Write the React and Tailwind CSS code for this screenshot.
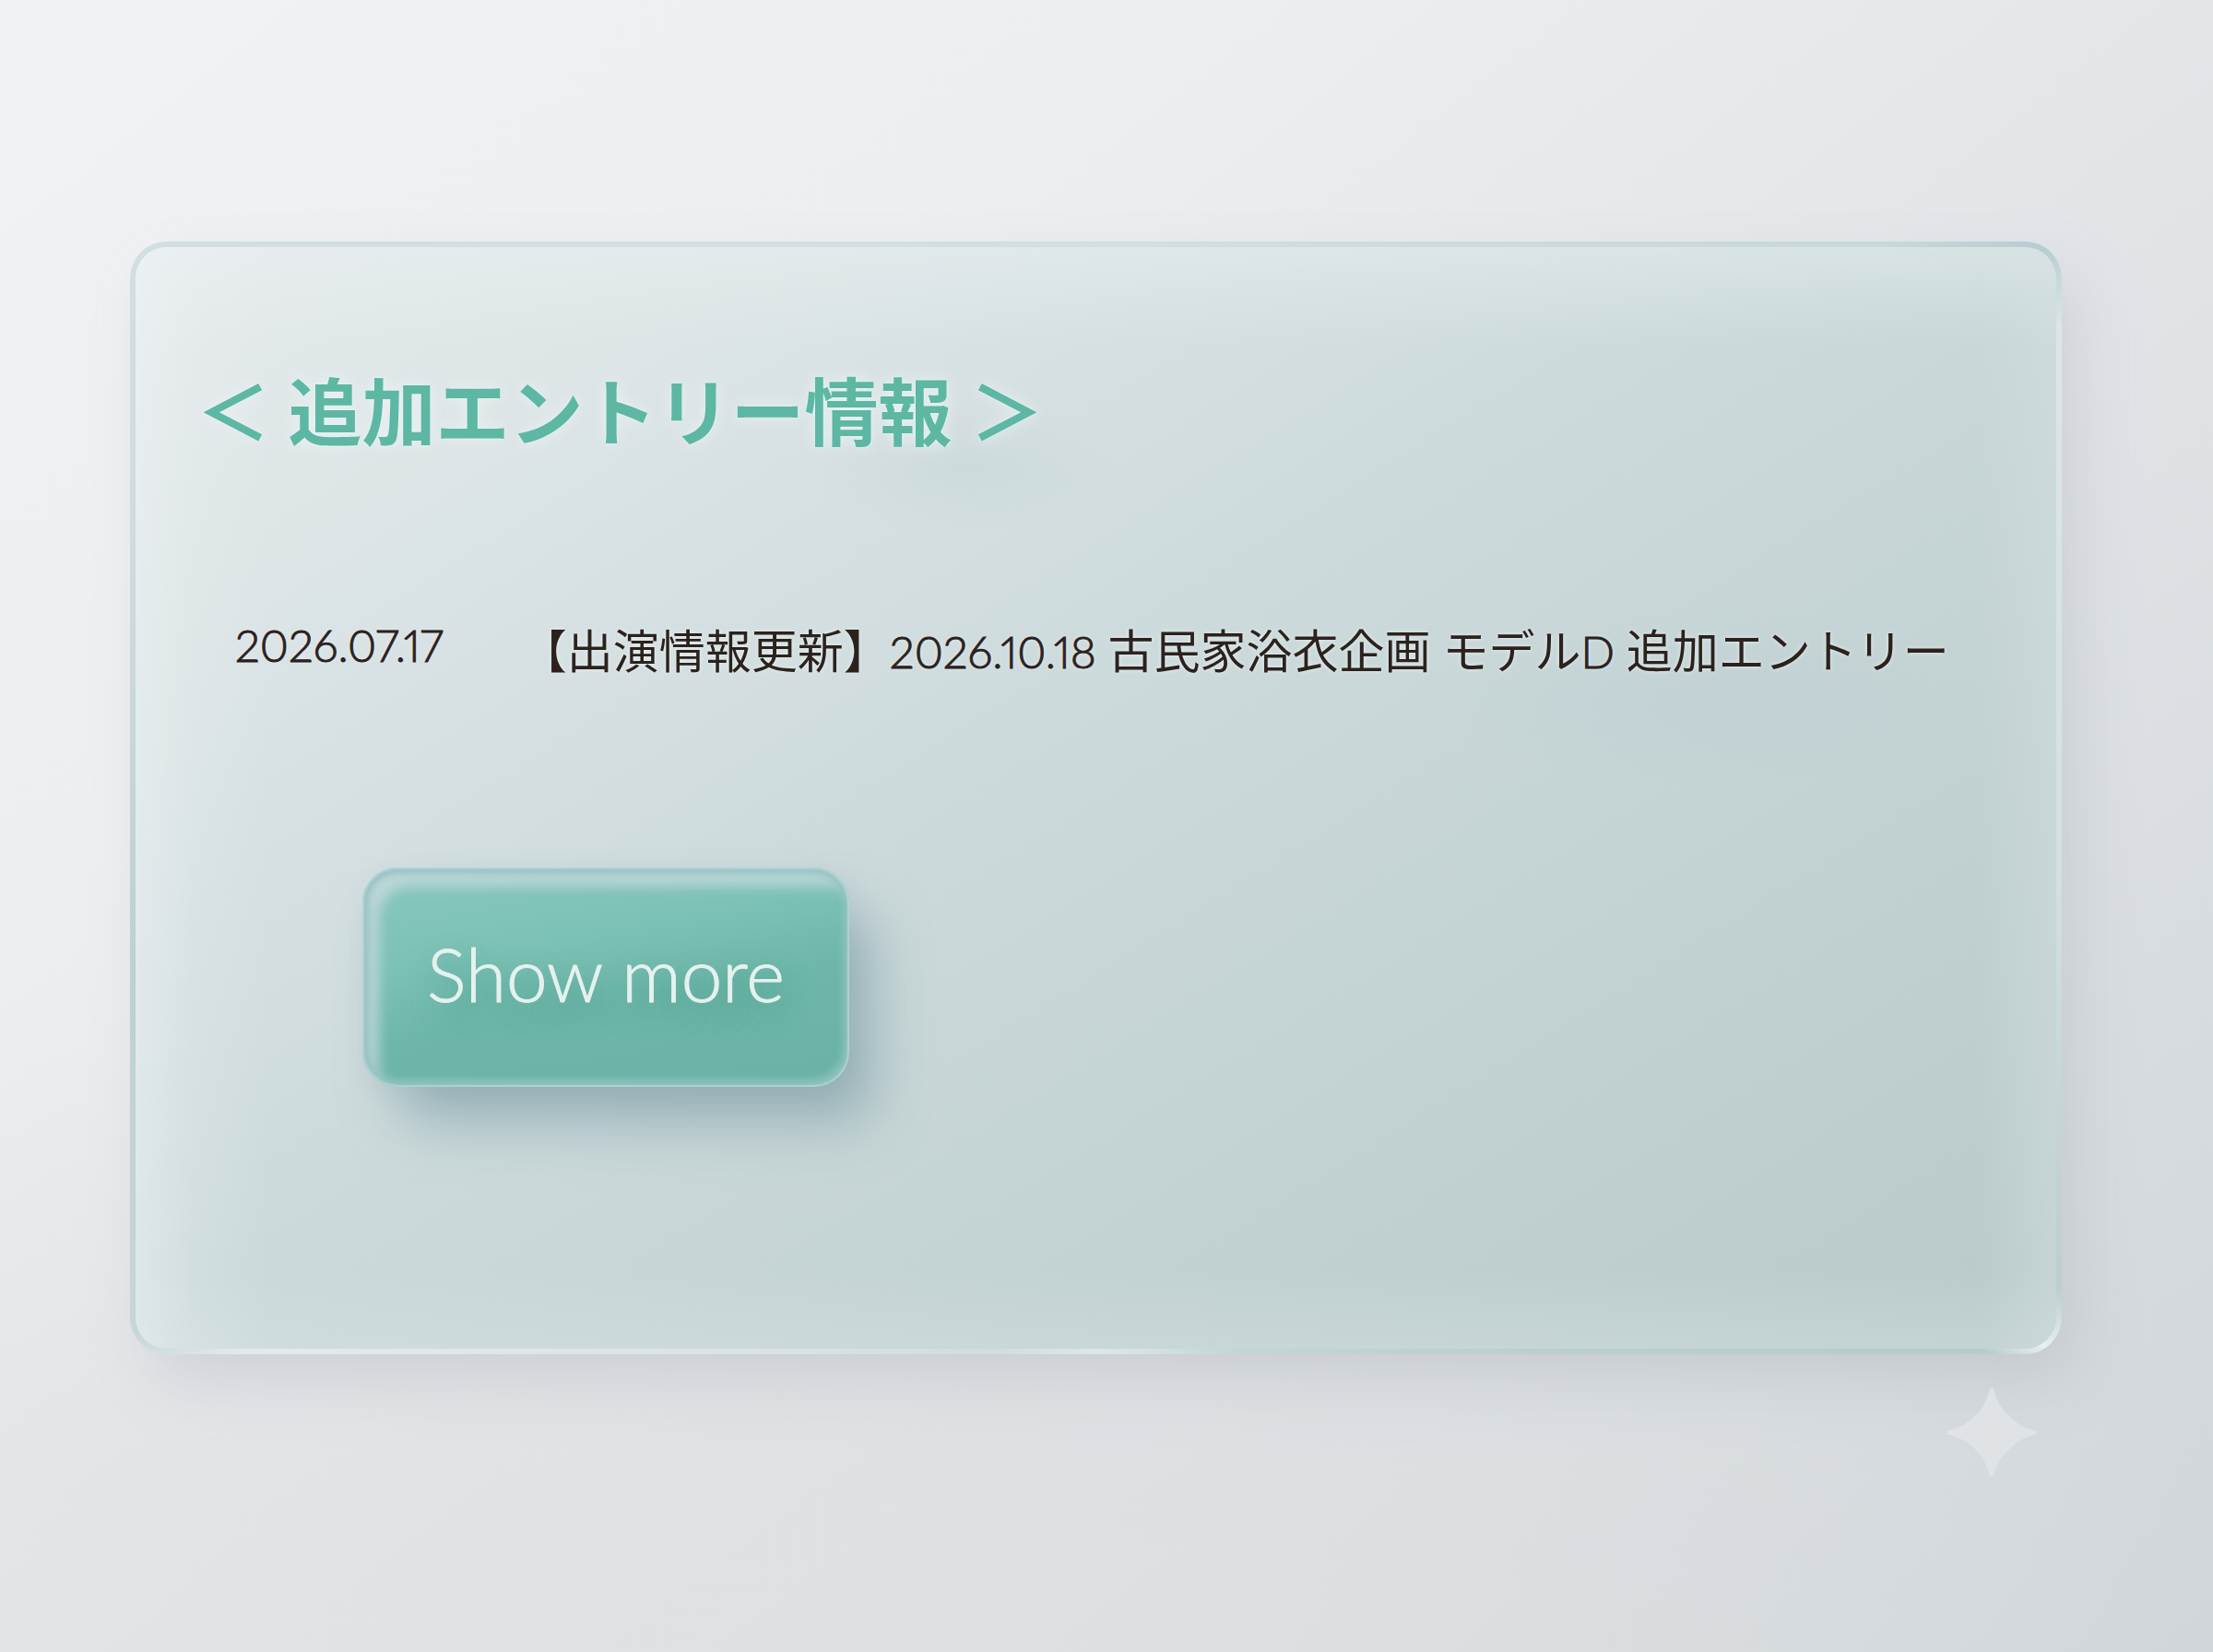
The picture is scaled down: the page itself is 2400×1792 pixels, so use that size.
const entries = [
  {
    date: "2026.07.17",
    tag: "【出演情報更新】",
    eventDate: "2026.10.18",
    title: " 古民家浴衣企画 モデル",
    model: "D",
    suffix: " 追加エントリー",
  },
];

function Sparkle() {
  return (
    <svg viewBox="0 0 96 96" className="mt-[37px] mr-7 size-24 self-end" aria-hidden="true">
      <path
        d="M46 0h4C54 16 58 21 66 29C75 38 82 43 96 46v4C82 53 75 58 67 66C58 75 54 80 50 96h-4C42 80 38 75 30 66C21 58 14 53 0 50v-4C14 43 21 38 30 30C38 22 42 16 46 0Z"
        fill="#dfe3e6"
      />
    </svg>
  );
}

export default function App() {
  return (
    <main
      className="flex min-h-screen flex-col bg-[radial-gradient(ellipse_70%_40%_at_36%_98%,rgba(223,225,227,0.85),transparent),linear-gradient(142deg,#f0f2f4_0%,#eceef0_28%,#e0e3e6_60%,#cfd5d9_100%)] pt-[262px] pr-[164px] pb-48 pl-[141px] font-['Lato','Noto_Sans_CJK_JP',sans-serif]"
      lang="ja"
    >
      <section className="flex flex-col items-start rounded-[40px] border-[6px] border-transparent bg-[radial-gradient(ellipse_8%_6%_at_43%_20%,rgba(188,207,208,0.3),transparent),radial-gradient(ellipse_14%_8%_at_82%_41%,rgba(178,199,208,0.2),transparent),linear-gradient(90deg,rgba(238,243,245,0.5),rgba(238,243,245,0.15)_3%,transparent_7%,transparent_96%,rgba(215,226,227,0.4)),linear-gradient(180deg,rgba(235,242,243,0.4),rgba(235,242,243,0.2)_4%,transparent_9%,transparent_93%,rgba(220,230,231,0.3)),linear-gradient(148deg,#e6ebed_0%,#dae3e5_22%,#cbd9da_48%,#c2d1d2_72%,#b9cacb_100%),conic-gradient(#d2dfe0_0deg,#c9d8da_55deg,#b8ccd1_60deg,#dbe7e7_64deg,#d2e0e0_95deg,#bccecd_117deg,#e6f0ef_120deg,#b7cbc9_122deg,#c3d5d4_165deg,#dce8e8_180deg,#cfdddd_190deg,#e1eaec_237deg,#c5d6d5_241deg,#bed0cf_260deg,#cfdcde_285deg,#d2dee0_300deg,#d2dfe0_360deg)] px-[66px] pt-[130px] pb-[284px] shadow-[20px_32px_64px_-8px_rgba(165,173,180,0.36)] [background-clip:padding-box,padding-box,padding-box,padding-box,padding-box,border-box] [background-origin:padding-box,padding-box,padding-box,padding-box,padding-box,border-box]">
        <h1 className="text-[80px] leading-[96px] font-bold text-[#5db7a3] [text-shadow:0_0_3px_rgba(225,250,245,0.9),0_0_18px_rgba(240,246,248,0.8)]">
          ＜ 追加エントリー情報 ＞
        </h1>

        <ul className="mt-44 w-full pl-[42px]">
          {entries.map((entry) => (
            <li
              key={entry.date}
              className="flex items-start gap-[84px] text-[50px] proportional-nums text-[#2b221e] [text-shadow:0_0_5px_rgba(235,242,243,0.9)]"
            >
              <time className="text-[48px] leading-[60px] font-light [-webkit-text-stroke:1px_#2b221e]">
                {entry.date}
              </time>
              <p className="leading-[72px]">
                {entry.tag}
                <time className="text-[48px] font-light [-webkit-text-stroke:1px_#2b221e]">
                  {entry.eventDate}
                </time>
                {entry.title}
                <span className="text-[48px] font-light [-webkit-text-stroke:1px_#2b221e]">
                  {entry.model}
                </span>
                {entry.suffix}
              </p>
            </li>
          ))}
        </ul>

        <button
          type="button"
          className="mt-[198px] ml-[180px] h-[238px] rounded-[38px] bg-[linear-gradient(170deg,#8ac8bd_0%,#7cc1b5_35%,#6db6a8_60%,#6ab2a5_100%)] px-[70px] pb-2 text-[80px] font-light text-[#e6f1ee] shadow-[inset_0_0_2px_2px_rgba(210,234,232,0.5),inset_-4px_-6px_10px_2px_rgba(170,212,208,0.5),inset_0_0_10px_5px_rgba(125,178,180,0.75),inset_14px_16px_14px_4px_rgba(205,222,224,0.75),32px_44px_60px_-8px_rgba(115,150,158,0.6),4px_8px_24px_rgba(150,180,184,0.2)] [-webkit-text-stroke:1px_#e6f1ee] [text-shadow:4px_14px_28px_rgba(40,140,120,0.65)]"
        >
          Show more
        </button>
      </section>

      <Sparkle />
    </main>
  );
}
